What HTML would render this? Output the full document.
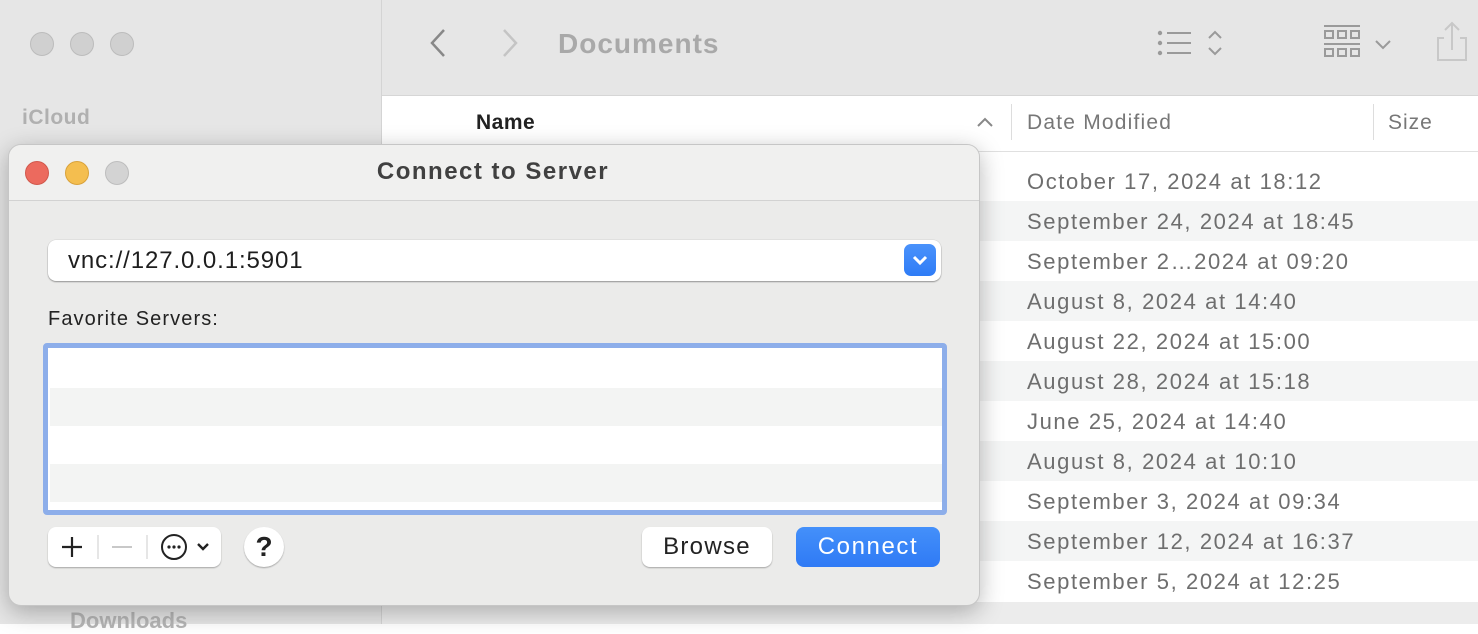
<!DOCTYPE html><html><head><style>
*{margin:0;padding:0;box-sizing:border-box}
body{width:1478px;height:624px;overflow:hidden;position:relative;background:#fff;font-family:"Liberation Sans",sans-serif}
.a{position:absolute}
.dot{position:absolute;width:24px;height:24px;border-radius:50%}
.row{position:absolute;left:382px;width:1096px;height:40px;font-size:22px;letter-spacing:1.6px;color:#6e6e6e;padding-left:645px;line-height:41px}
</style></head><body>
<div class="a" style="left:0;top:0;width:381px;height:624px;background:#e6e6e6"></div>
<div class="a" style="left:381px;top:0;width:1px;height:624px;background:#d4d4d4"></div>
<div class="a" style="left:382px;top:0;width:1096px;height:96px;background:#e6e6e6;border-bottom:1px solid #d6d6d6"></div>
<div class="dot" style="left:30px;top:32px;background:#d0d0d0;border:1px solid #bcbcbc"></div>
<div class="dot" style="left:70px;top:32px;background:#d0d0d0;border:1px solid #bcbcbc"></div>
<div class="dot" style="left:110px;top:32px;background:#d0d0d0;border:1px solid #bcbcbc"></div>
<div class="a" style="left:22px;top:106px;font-size:21px;font-weight:bold;color:#b0b0b0;letter-spacing:.5px">iCloud</div>
<div class="a" style="left:70px;top:608px;font-size:22px;font-weight:bold;color:#b5b5b5">Downloads</div>
<svg class="a" style="left:424px;top:26px" width="110" height="36"><path d="M20 4 L8 17 L20 30" fill="none" stroke="#888" stroke-width="2.5"/><path d="M80 4 L92 17 L80 30" fill="none" stroke="#c4c4c4" stroke-width="2.5"/></svg>
<div class="a" style="left:558px;top:28px;font-size:28px;font-weight:bold;color:#a9a9a9;letter-spacing:1px">Documents</div>
<svg class="a" style="left:1150px;top:20px" width="320" height="46"><g fill="none" stroke="#9a9a9a" stroke-width="2"><circle cx="10" cy="13" r="1.2" fill="#9a9a9a"/><circle cx="10" cy="23" r="1.2" fill="#9a9a9a"/><circle cx="10" cy="33" r="1.2" fill="#9a9a9a"/><path d="M17 13h24M17 23h24M17 33h24M59 18l6-6 6 6M59 28l6 6 6-6"/><path d="M174 6h36M174 24h36"/><rect x="175" y="11" width="8" height="7"/><rect x="188" y="11" width="8" height="7"/><rect x="201" y="11" width="8" height="7"/><rect x="175" y="29" width="8" height="7"/><rect x="188" y="29" width="8" height="7"/><rect x="201" y="29" width="8" height="7"/><path d="M226 21l7 7 7-7"/></g><g fill="none" stroke="#c8c8c8" stroke-width="2"><path d="M294 18h-6v22h28v-22h-6M302 30v-26M295 10l7-7 7 7"/></g></svg>
<div class="a" style="left:476px;top:111px;font-size:21px;font-weight:bold;color:#222;letter-spacing:.5px">Name</div>
<svg class="a" style="left:975px;top:115px" width="20" height="14"><path d="M3 11l7-7 7 7" fill="none" stroke="#888" stroke-width="2"/></svg>
<div class="a" style="left:1011px;top:104px;width:1px;height:36px;background:#ddd"></div>
<div class="a" style="left:1373px;top:104px;width:1px;height:36px;background:#ddd"></div>
<div class="a" style="left:1027px;top:111px;font-size:21px;color:#777;letter-spacing:1.2px">Date Modified</div>
<div class="a" style="left:1388px;top:111px;font-size:21px;color:#777;letter-spacing:1px">Size</div>
<div class="a" style="left:382px;top:151px;width:1096px;height:1px;background:#e0e0e0"></div>
<div class="row" style="top:161px">October 17, 2024 at 18:12</div>
<div class="row" style="top:201px;background:#f4f5f5">September 24, 2024 at 18:45</div>
<div class="row" style="top:241px">September 2…2024 at 09:20</div>
<div class="row" style="top:281px;background:#f4f5f5">August 8, 2024 at 14:40</div>
<div class="row" style="top:321px">August 22, 2024 at 15:00</div>
<div class="row" style="top:361px;background:#f4f5f5">August 28, 2024 at 15:18</div>
<div class="row" style="top:401px">June 25, 2024 at 14:40</div>
<div class="row" style="top:441px;background:#f4f5f5">August 8, 2024 at 10:10</div>
<div class="row" style="top:481px">September 3, 2024 at 09:34</div>
<div class="row" style="top:521px;background:#f4f5f5">September 12, 2024 at 16:37</div>
<div class="row" style="top:561px">September 5, 2024 at 12:25</div>
<div class="a" style="left:382px;top:602px;width:1096px;height:22px;background:#ececec"></div>
<div class="a" style="left:8px;top:144px;width:972px;height:462px;background:#ebebea;border:1px solid #c6c6c6;border-radius:13px;box-shadow:0 6px 24px rgba(0,0,0,.28);overflow:hidden">
 <div class="a" style="left:0;top:0;width:972px;height:56px;background:#f0f0ef;border-bottom:1px solid #d2d2d2"></div>
 <div class="dot" style="left:16px;top:16px;background:#ec6a5e;border:1px solid #d1584c"></div>
 <div class="dot" style="left:56px;top:16px;background:#f4be4f;border:1px solid #d9a23a"></div>
 <div class="dot" style="left:96px;top:16px;background:#d3d3d3;border:1px solid #bdbdbd"></div>
 <div class="a" style="left:0;top:13px;width:968px;text-align:center;font-size:24px;font-weight:bold;color:#404040;letter-spacing:1.5px">Connect to Server</div>
 <div class="a" style="left:39px;top:95px;width:893px;height:41px;background:#fff;border-radius:8px;box-shadow:0 1px 1.5px rgba(0,0,0,.35),0 0 0 .5px rgba(0,0,0,.08)"></div>
 <div class="a" style="left:59px;top:102px;font-size:24px;color:#1e1e1e;letter-spacing:.9px">vnc://127.0.0.1:5901</div>
 <div class="a" style="left:895px;top:99px;width:32px;height:32px;border-radius:7px;background:linear-gradient(#4a92fb,#2f7cf6)"><svg width="32" height="32"><path d="M10 13l6 6 6-6" fill="none" stroke="#fff" stroke-width="3"/></svg></div>
 <div class="a" style="left:39px;top:163px;font-size:20px;color:#222;letter-spacing:1.1px">Favorite Servers:</div>
 <div class="a" style="left:34px;top:198px;width:904px;height:172px;border:5px solid #8daeea;border-radius:4px;background:#fff;overflow:hidden">
  <div class="a" style="left:2px;top:40px;width:900px;height:38px;background:#f3f4f3"></div>
  <div class="a" style="left:2px;top:116px;width:900px;height:38px;background:#f3f4f3"></div>
 </div>
 <div class="a" style="left:39px;top:382px;width:173px;height:40px;background:#fff;border-radius:8px;box-shadow:0 1px 1.5px rgba(0,0,0,.3)">
  <svg width="173" height="40"><path d="M24 10v20M14 20h20" stroke="#222" stroke-width="2.2"/><path d="M50 8v24M99 8v24" stroke="#ddd" stroke-width="1.5"/><path d="M64 20h20" stroke="#c8c8c8" stroke-width="2"/><circle cx="126" cy="20" r="12" fill="none" stroke="#222" stroke-width="2"/><circle cx="121" cy="20" r="1.6" fill="#222"/><circle cx="126" cy="20" r="1.6" fill="#222"/><circle cx="131" cy="20" r="1.6" fill="#222"/><path d="M150 17l5 5 5-5" fill="none" stroke="#222" stroke-width="2.4"/></svg>
 </div>
 <div class="a" style="left:235px;top:382px;width:40px;height:40px;border-radius:50%;background:#fff;box-shadow:0 1px 1.5px rgba(0,0,0,.3);text-align:center;font-size:28px;font-weight:bold;line-height:40px;color:#222">?</div>
 <div class="a" style="left:633px;top:382px;width:130px;height:40px;border-radius:8px;background:#fff;box-shadow:0 1px 1.5px rgba(0,0,0,.3);text-align:center;font-size:24px;line-height:39px;color:#222;letter-spacing:1.3px">Browse</div>
 <div class="a" style="left:787px;top:382px;width:144px;height:40px;border-radius:8px;background:linear-gradient(#4490fa,#2f7af5);text-align:center;font-size:24px;line-height:39px;color:#fff;letter-spacing:1.6px">Connect</div>
</div>
</body></html>
